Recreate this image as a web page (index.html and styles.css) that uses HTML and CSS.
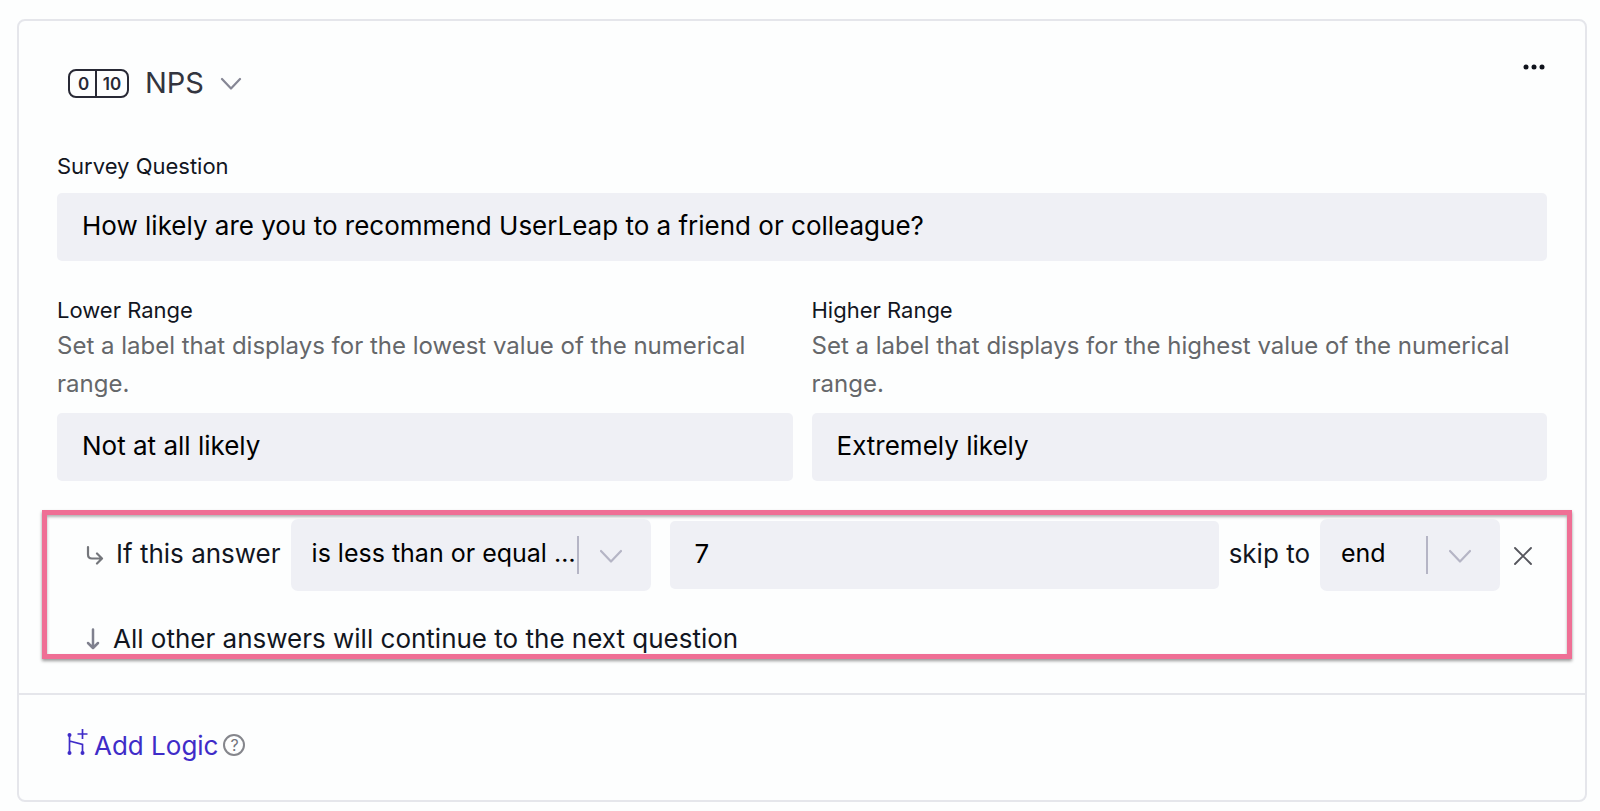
FILE: index.html
```html
<!DOCTYPE html>
<html lang="en">
<head>
<meta charset="utf-8">
<meta name="viewport" content="width=device-width, initial-scale=1">
<title>Survey question</title>
<link rel="stylesheet" href="styles.css">
</head>
<body>
<main class="card">
  <div class="card-body">
    <header class="card-header">
      <button class="type-picker" type="button">
        <span class="scale-icon"><span class="scale-low">0</span><span class="scale-high">10</span></span>
        <span class="type-name">NPS</span>
        <svg class="type-chevron" width="22" height="14" viewBox="0 0 22 14" fill="none" stroke="currentColor" stroke-width="2.200" stroke-linecap="round" stroke-linejoin="round"><path d="M2 3l9 9.500L20 3"/></svg>
      </button>
      <button class="icon-button more" type="button" aria-label="More options">
        <svg width="22" height="6" viewBox="0 0 22 6" fill="currentColor"><circle cx="3" cy="3" r="2.500"/><circle cx="11" cy="3" r="2.500"/><circle cx="19" cy="3" r="2.500"/></svg>
      </button>
    </header>

    <div class="field">
      <label class="label" for="question">Survey Question</label>
      <input class="input" id="question" type="text" value="How likely are you to recommend UserLeap to a friend or colleague?">
    </div>

    <div class="ranges">
      <div class="field">
        <label class="label" for="lower">Lower Range</label>
        <p class="hint">Set a label that displays for the lowest value of the numerical range.</p>
        <input class="input" id="lower" type="text" value="Not at all likely">
      </div>
      <div class="field">
        <label class="label" for="higher">Higher Range</label>
        <p class="hint">Set a label that displays for the highest value of the numerical range.</p>
        <input class="input" id="higher" type="text" value="Extremely likely">
      </div>
    </div>

    <section class="logic">
      <div class="rule">
        <svg class="branch-icon" width="18" height="20" viewBox="0 0 18 20" fill="none" stroke="currentColor" stroke-width="2.200" stroke-linecap="round" stroke-linejoin="round"><path d="M2 2v7.500q0 4 4 4H15.500M11 8.500l5 5-5 5"/></svg>
        <label class="rule-text" for="condition">If this answer</label>
        <div class="select condition">
          <select id="condition"><option>is less than or equal …</option></select>
          <span class="select-arrow"><svg width="22" height="16" viewBox="0 0 22 16" fill="none" stroke="currentColor" stroke-width="2.200" stroke-linecap="round" stroke-linejoin="round"><path d="M1 4l10 10.500L21 4"/></svg></span>
        </div>
        <input class="input threshold" type="text" value="7" aria-label="Threshold">
        <label class="rule-text" for="target">skip to</label>
        <div class="select target">
          <select id="target"><option>end</option></select>
          <span class="select-arrow"><svg width="22" height="16" viewBox="0 0 22 16" fill="none" stroke="currentColor" stroke-width="2.200" stroke-linecap="round" stroke-linejoin="round"><path d="M1 4l10 10.500L21 4"/></svg></span>
        </div>
        <button class="icon-button remove" type="button" aria-label="Remove rule">
          <svg width="18" height="20" viewBox="0 0 18 20" stroke="currentColor" stroke-width="1.900" stroke-linecap="round"><path d="M1 3l16 16M17 3L1 19"/></svg>
        </button>
      </div>
      <p class="fallback">
        <svg class="down-icon" width="14" height="22" viewBox="0 0 14 22" fill="none" stroke="currentColor" stroke-width="2.500" stroke-linecap="round" stroke-linejoin="round"><path d="M7 1.500v18M2 15l5 5 5-5"/></svg>
        <span>All other answers will continue to the next question</span>
      </p>
    </section>
  </div>

  <footer class="card-footer">
    <button class="add-logic" type="button">
      <svg width="22" height="28" viewBox="0 0 22 28" fill="none" stroke="currentColor" stroke-width="1.700"><path d="M2.500 7v18M2.500 13l13 3.500V25M15.500 1v10M10.500 6h10"/><g fill="currentColor" stroke="none"><circle cx="2.500" cy="7" r="2"/><circle cx="2.500" cy="25" r="2"/><circle cx="15.500" cy="25" r="2"/></g></svg>
      <span>Add Logic</span>
    </button>
    <button class="help" type="button" aria-label="Help">?</button>
  </footer>
</main>
</body>
</html>
```
FILE: styles.css
```css
* {
  box-sizing: border-box;
}

body {
  margin: 0;
  padding: 19px 13px 9px 17px;
  background: #fdfefe;
  color: #12161f;
  font-family: Inter, "Liberation Sans", sans-serif;
  font-size: 26px;
}

button,
input,
select {
  margin: 0;
  padding: 0;
  border: 0;
  background: none;
  color: inherit;
  font: inherit;
}

button {
  cursor: pointer;
}

svg {
  display: block;
  flex: none;
}

p {
  margin: 0;
}

.card {
  border: 2px solid #e5e6eb;
  border-radius: 8px;
}

.card-body {
  padding: 40px 38px 34px;
}

.card-header {
  display: flex;
  align-items: flex-start;
  justify-content: space-between;
  height: 88px;
}

.type-picker {
  display: flex;
  align-items: center;
  gap: 16px;
  margin-left: 11px;
  height: 44px;
  color: #33353f;
  font-size: 29px;
}

.type-name {
  padding-bottom: 2px;
}

.scale-icon {
  display: flex;
  width: 61px;
  height: 29px;
  border: 2px solid #282935;
  border-radius: 8px;
  color: #282935;
  font-size: 17px;
  font-weight: 600;
  line-height: 26px;
  text-align: center;
}

.scale-low {
  width: 27px;
  padding-left: 2px;
  border-right: 2px solid #282935;
}

.scale-high {
  flex: 1;
}

.type-chevron {
  color: #868795;
}

.icon-button {
  display: flex;
  align-items: center;
  justify-content: center;
}

.more {
  width: 26px;
  height: 12px;
  color: #10131c;
}

.field {
  display: flex;
  flex-direction: column;
}

.label {
  font-size: 22px;
  line-height: 34px;
}

.hint {
  color: #65676a;
  font-size: 24px;
  line-height: 38px;
}

.input {
  width: 100%;
  min-width: 0;
  height: 68px;
  padding: 0 25px 4px;
  border-radius: 5px;
  background: #eff0f5;
  color: #000;
}

.field > .input {
  margin-top: 10px;
}

.ranges {
  display: grid;
  grid-template-columns: 1fr 1fr;
  gap: 19px;
  margin-top: 32px;
}

.logic {
  margin: 29px -25px 0 -15px;
  padding: 4px 67px 0 39px;
  border: 5px solid #ef6f95;
  box-shadow: 0 2px 3px rgba(0, 0, 0, 0.4), inset 0 2px 3px rgba(0, 0, 0, 0.3);
}

.rule {
  display: flex;
  align-items: center;
}

.branch-icon {
  margin-right: 12px;
  color: #74767b;
}

.rule-text {
  flex: none;
  padding-bottom: 4px;
}

.select {
  display: grid;
  flex: none;
  height: 72px;
  margin-left: 10px;
  border-radius: 7px;
  background: #eff0f5;
  color: #000;
}

.select select,
.select-arrow {
  grid-area: 1 / 1;
}

.select select {
  appearance: none;
  width: 100%;
  padding: 0 64px 4px 21px;
  font-size: 25px;
}

.select-arrow {
  display: flex;
  align-items: center;
  align-self: center;
  justify-self: end;
  width: 74px;
  height: 38px;
  padding-left: 21px;
  border-left: 2px solid #b5b5c5;
  color: #b5b5c5;
  pointer-events: none;
}

.condition {
  width: 360px;
}

.threshold {
  flex: 1;
  width: auto;
  margin: 0 10px 0 19px;
}

.target {
  width: 180px;
}

.remove {
  width: 18px;
  height: 20px;
  margin: 0 -32px 0 14px;
  color: #55565d;
}

.fallback {
  display: flex;
  align-items: center;
  gap: 13px;
  margin-top: 32px;
  line-height: 31px;
}

.down-icon {
  color: #7f808e;
}

.card-footer {
  display: flex;
  align-items: center;
  gap: 5px;
  height: 107px;
  padding: 0 48px 5px;
  border-top: 2px solid #e5e6eb;
}

.add-logic {
  display: flex;
  align-items: center;
  gap: 5px;
  color: #3f2cc8;
}

.add-logic svg {
  margin-bottom: 6px;
}

.help {
  width: 22px;
  height: 22px;
  border: 2px solid #85868c;
  border-radius: 50%;
  color: #74757c;
  font-size: 16px;
  line-height: 18px;
}
```
